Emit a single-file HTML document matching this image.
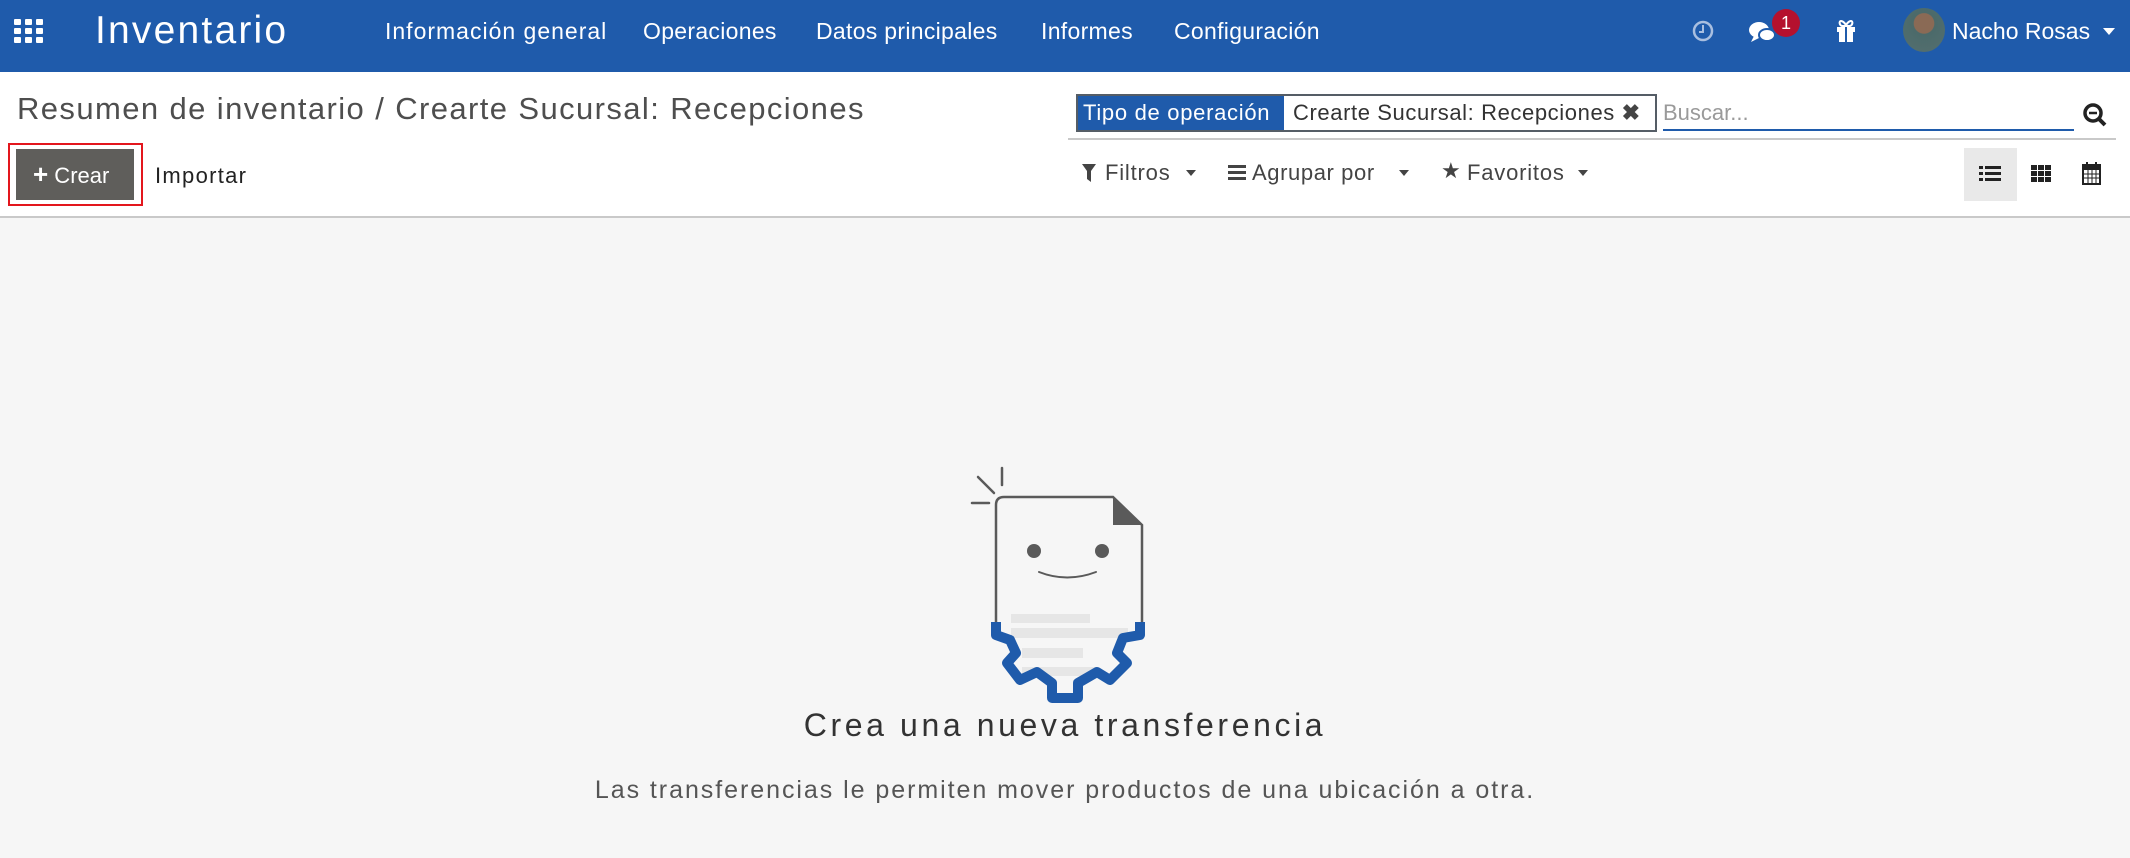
<!DOCTYPE html>
<html><head><meta charset="utf-8"><style>
*{margin:0;padding:0;box-sizing:border-box}
body{width:2130px;height:858px;overflow:hidden;background:#f6f6f6;font-family:"Liberation Sans",sans-serif;position:relative}
.abs{position:absolute;white-space:nowrap}
#nav{position:absolute;left:0;top:0;width:2130px;height:72px;background:#1f5bab}
.nv{position:absolute;top:18px;color:#fff;font-size:23px;letter-spacing:0.3px}
#top{position:absolute;left:0;top:72px;width:2130px;height:146px;background:#fff;border-bottom:2px solid #c9c9c9}
.gray{color:#4c4c4c}
</style></head><body>
<div id="nav">
 <svg class="abs" style="left:14px;top:19px" width="30" height="24" viewBox="0 0 30 24">
  <g fill="#fff"><rect x="0" y="0" width="7" height="6" rx="1"/><rect x="11" y="0" width="7" height="6" rx="1"/><rect x="22" y="0" width="7" height="6" rx="1"/>
  <rect x="0" y="9" width="7" height="6" rx="1"/><rect x="11" y="9" width="7" height="6" rx="1"/><rect x="22" y="9" width="7" height="6" rx="1"/>
  <rect x="0" y="18" width="7" height="6" rx="1"/><rect x="11" y="18" width="7" height="6" rx="1"/><rect x="22" y="18" width="7" height="6" rx="1"/></g></svg>
 <div class="abs" style="left:95px;top:9px;color:#fff;font-size:39px;letter-spacing:2.2px">Inventario</div>
 <div class="nv" style="left:385px;letter-spacing:1px">Información general</div>
 <div class="nv" style="left:643px">Operaciones</div>
 <div class="nv" style="left:816px">Datos principales</div>
 <div class="nv" style="left:1041px">Informes</div>
 <div class="nv" style="left:1174px">Configuración</div>
 <svg class="abs" style="left:1692px;top:20px" width="22" height="22" viewBox="0 0 22 22"><circle cx="11" cy="11" r="9" fill="none" stroke="#a9bfe0" stroke-width="2.5"/><path d="M11 5v7h-4" fill="none" stroke="#a9bfe0" stroke-width="2"/></svg>
 <svg class="abs" style="left:1748px;top:20px" width="30" height="26" viewBox="0 0 30 26"><ellipse cx="11" cy="10" rx="10" ry="8" fill="#fff"/><path d="M6 16l-3 6 8-4z" fill="#fff"/><ellipse cx="19" cy="15" rx="8" ry="6" fill="#fff" stroke="#1f5bab" stroke-width="2"/></svg>
 <div class="abs" style="left:1772px;top:9px;width:28px;height:28px;border-radius:14px;background:#b5112e;color:#fff;font-size:18px;text-align:center;line-height:28px">1</div>
 <svg class="abs" style="left:1836px;top:19px" width="20" height="24" viewBox="0 0 20 24"><path d="M5 2c2 0 5 3 5 5c0-2 3-5 5-5s2 4-1 5H6C3 6 3 2 5 2z" fill="none" stroke="#fff" stroke-width="2"/><rect x="1" y="8" width="18" height="5" fill="#fff"/><rect x="3" y="13" width="14" height="10" fill="#fff"/><rect x="9" y="8" width="2" height="15" fill="#1f5bab"/></svg>
 <div class="abs" style="left:1903px;top:8px;width:42px;height:44px;border-radius:50%;background:radial-gradient(circle at 50% 35%,#8a6a55 0 28%,#4b6a6a 30%,#556f6f)"></div>
 <div class="abs" style="left:1952px;top:18px;color:#fff;font-size:23px">Nacho Rosas</div>
 <div class="abs" style="left:2103px;top:28px;width:0;height:0;border-left:6px solid transparent;border-right:6px solid transparent;border-top:7px solid #fff"></div>
</div>
<div id="top">
 <div class="abs gray" style="left:17px;top:19px;font-size:31px;letter-spacing:1.4px;color:#4e4e4e">Resumen de inventario / Crearte Sucursal: Recepciones</div>
 <div class="abs" style="left:8px;top:71px;width:135px;height:63px;border:2px solid #e3161d"></div>
 <div class="abs" style="left:16px;top:77px;width:118px;height:51px;background:#5f5e5b;color:#fff;font-size:22px;line-height:51px;padding-left:17px"><b style="font-size:26px">+</b> Crear</div>
 <div class="abs" style="left:155px;top:91px;font-size:22px;color:#222;letter-spacing:1.3px">Importar</div>
 <div class="abs" style="left:1076px;top:22px;width:581px;height:38px;border:2px solid #555d66;background:#fff"></div>
 <div class="abs" style="left:1078px;top:24px;width:206px;height:34px;background:#1f5bab;color:#fff;font-size:22px;line-height:34px;padding-left:5px;letter-spacing:0.7px">Tipo de operación</div>
 <div class="abs" style="left:1293px;top:24px;font-size:22px;line-height:34px;color:#333;letter-spacing:0.6px">Crearte Sucursal: Recepciones <b style="color:#444">✖</b></div>
 <div class="abs" style="left:1663px;top:28px;font-size:22px;color:#9a9a9a">Buscar...</div>
 <div class="abs" style="left:1663px;top:57px;width:411px;height:2px;background:#1f5bab"></div>
 <svg class="abs" style="left:2082px;top:30px" width="26" height="26" viewBox="0 0 26 26"><circle cx="11" cy="11" r="8" fill="none" stroke="#222" stroke-width="3.5"/><path d="M17 17l6 6" stroke="#222" stroke-width="4"/><path d="M7 11h8" stroke="#222" stroke-width="2.5"/></svg>
 <div class="abs" style="left:1068px;top:66px;width:1048px;height:2px;background:#c9c9c9"></div>
 <svg class="abs" style="left:1082px;top:92px" width="14" height="18" viewBox="0 0 14 18"><path d="M0 0h14L9 7v11l-4-3V7z" fill="#444"/></svg>
 <div class="abs" style="left:1105px;top:88px;font-size:22px;color:#444;letter-spacing:0.8px">Filtros</div>
 <div class="abs" style="left:1186px;top:98px;border-left:5px solid transparent;border-right:5px solid transparent;border-top:6px solid #444"></div>
 <svg class="abs" style="left:1228px;top:93px" width="18" height="16" viewBox="0 0 18 16"><g fill="#444"><rect y="0" width="18" height="3"/><rect y="6" width="18" height="3"/><rect y="12" width="18" height="3"/></g></svg>
 <div class="abs" style="left:1252px;top:88px;font-size:22px;color:#444;letter-spacing:0.6px">Agrupar por</div>
 <div class="abs" style="left:1399px;top:98px;border-left:5px solid transparent;border-right:5px solid transparent;border-top:6px solid #444"></div>
 <div class="abs" style="left:1441px;top:86px;font-size:22px;color:#444">★</div>
 <div class="abs" style="left:1467px;top:88px;font-size:22px;color:#444;letter-spacing:0.8px">Favoritos</div>
 <div class="abs" style="left:1578px;top:98px;border-left:5px solid transparent;border-right:5px solid transparent;border-top:6px solid #444"></div>
 <div class="abs" style="left:1964px;top:76px;width:53px;height:53px;background:#e9e9e9"></div>
 <svg class="abs" style="left:1979px;top:94px" width="22" height="16" viewBox="0 0 22 16"><g fill="#222"><rect x="0" y="0" width="4" height="3"/><rect x="6" y="0" width="16" height="3"/><rect x="0" y="6" width="4" height="3"/><rect x="6" y="6" width="16" height="3"/><rect x="0" y="12" width="4" height="3"/><rect x="6" y="12" width="16" height="3"/></g></svg>
 <svg class="abs" style="left:2031px;top:93px" width="20" height="18" viewBox="0 0 20 18"><g fill="#222"><rect x="0" y="0" width="6" height="5"/><rect x="7" y="0" width="6" height="5"/><rect x="14" y="0" width="6" height="5"/><rect x="0" y="6" width="6" height="5"/><rect x="7" y="6" width="6" height="5"/><rect x="14" y="6" width="6" height="5"/><rect x="0" y="12" width="6" height="5"/><rect x="7" y="12" width="6" height="5"/><rect x="14" y="12" width="6" height="5"/></g></svg>
 <svg class="abs" style="left:2082px;top:89px" width="19" height="24" viewBox="0 0 19 24"><rect x="1" y="4" width="17" height="19" fill="none" stroke="#222" stroke-width="2"/><rect x="1" y="4" width="17" height="5" fill="#222"/><rect x="4" y="1" width="2" height="5" fill="#222"/><rect x="13" y="1" width="2" height="5" fill="#222"/><path d="M1 13h17M1 17h17M6 9v14M10 9v14M14 9v14" stroke="#222" stroke-width="1"/></svg>
</div>
<svg class="abs" style="left:0;top:0" width="2130" height="858" viewBox="0 0 2130 858">
 <g stroke="#5a5a5a" stroke-width="2.5" stroke-linecap="round" fill="none">
  <path d="M978 477l16 16M1002 468v17M972 503h17"/>
  <path d="M996 625V505q0-8 8-8h109l29 28v100"/>
  <path d="M1039 572q28 11 57 0" stroke-width="2"/>
 </g>
 <path d="M1113 497l29 28h-29z" fill="#5a5a5a"/>
 <circle cx="1034" cy="551" r="7" fill="#5a5a5a"/><circle cx="1102" cy="551" r="7" fill="#5a5a5a"/>
 <g fill="#e6e6e6"><rect x="1011" y="614" width="79" height="9"/><rect x="1011" y="628" width="117" height="10"/><rect x="1022" y="648" width="61" height="10"/><rect x="1022" y="667" width="77" height="9"/></g>
 <path d="M996 622v13l14 5l6 13l-9 10l13 17l17-8l15 11v15h26v-15l19-11l13 8l17-17l-10-10l6-15l17-3v-13" fill="none" stroke="#1f5bab" stroke-width="10" stroke-linejoin="round"/>
</svg>
<div class="abs" style="left:0;width:2130px;top:707px;text-align:center;font-size:32px;letter-spacing:3.6px;color:#333">Crea una nueva transferencia</div>
<div class="abs" style="left:0;width:2130px;top:776px;text-align:center;font-size:25px;letter-spacing:1.95px;color:#555">Las transferencias le permiten mover productos de una ubicación a otra.</div>
</body></html>
